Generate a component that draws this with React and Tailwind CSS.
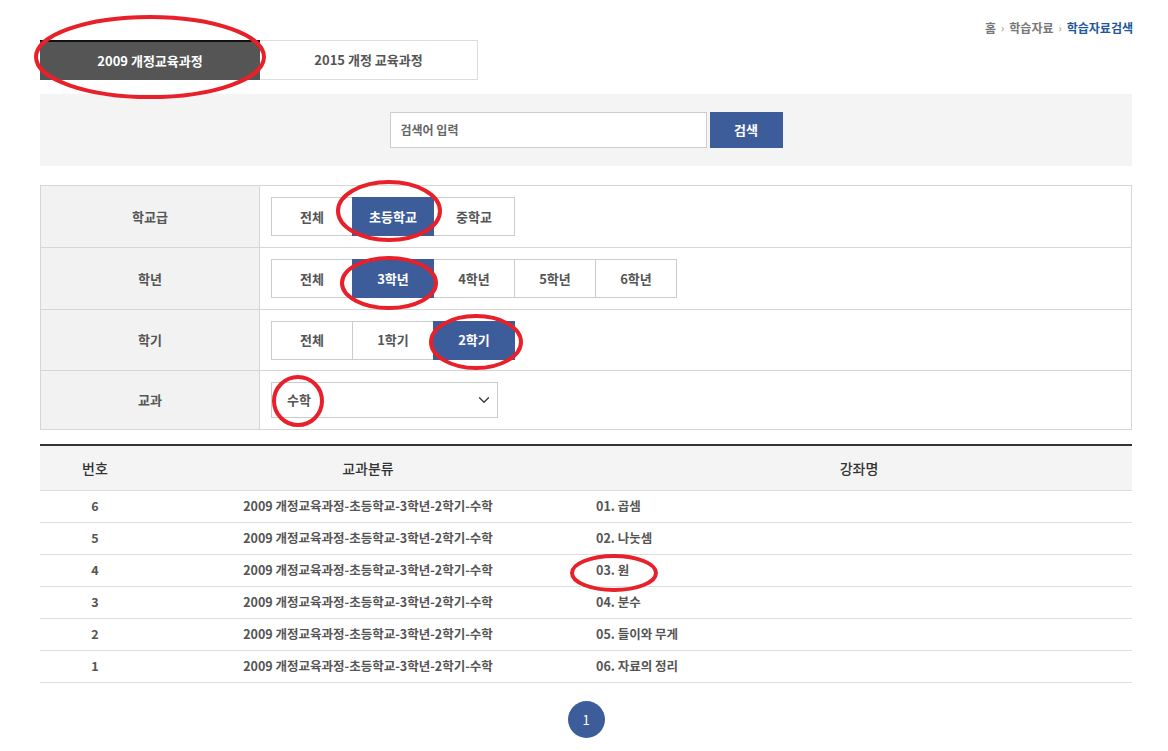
import { ChevronDown } from 'lucide-react'

const FONT = { fontFamily: '"Noto Sans CJK KR", "Noto Sans", sans-serif' }

const ROWS = [
  { no: 6, title: '01. 곱셈' },
  { no: 5, title: '02. 나눗셈' },
  { no: 4, title: '03. 원' },
  { no: 3, title: '04. 분수' },
  { no: 2, title: '05. 들이와 무게' },
  { no: 1, title: '06. 자료의 정리' },
]

function OptButton({ label, active }) {
  return (
    <div
      className={`w-[82px] h-[39px] -ml-px first:ml-0 flex items-center justify-center text-[13px] font-bold border ${
        active ? 'bg-[#3d5c9a] border-[#3d5c9a] text-white relative' : 'bg-white border-[#cccccc] text-[#555]'
      }`}
    >
      {label}
    </div>
  )
}

function FilterRow({ label, children, h }) {
  return (
    <div className={`flex border-b border-[#d6d6d6] last:border-b-0 ${h}`}>
      <div className="w-[219px] shrink-0 bg-[#f2f2f2] border-r border-[#d6d6d6] flex items-center justify-center text-[13px] font-bold text-[#555]">
        {label}
      </div>
      <div className="flex-1 flex items-center pl-[11px]">{children}</div>
    </div>
  )
}

export default function App() {
  return (
    <div className="relative w-[1168px] h-[751px] bg-white overflow-hidden" style={FONT}>
      {/* Breadcrumb */}
      <div className="flex justify-end items-center gap-[5px] pr-[35px] pt-[15px] h-[40px] text-[12px] text-[#777] font-bold">
        <span>홈</span>
        <span className="text-[#b5a68a] text-[10px]">›</span>
        <span>학습자료</span>
        <span className="text-[#b5a68a] text-[10px]">›</span>
        <span className="text-[#1e5799]">학습자료검색</span>
      </div>

      <div className="px-[40px] pr-[36px]">
        {/* Curriculum tabs */}
        <div className="flex h-[40px]">
          <div className="w-[220px] bg-[#555555] border-t-2 border-[#111] flex items-center justify-center text-[13px] font-bold text-white">
            2009 개정교육과정
          </div>
          <div className="w-[218px] border border-l-0 border-[#dddddd] flex items-center justify-center text-[13px] font-bold text-[#555]">
            2015 개정 교육과정
          </div>
        </div>

        {/* Search */}
        <div className="mt-[14px] h-[72px] bg-[#f4f4f4] flex items-center justify-center gap-[3px]">
          <div className="w-[317px] h-[36px] bg-white border border-[#cccccc] flex items-center pl-[10px] text-[12px] font-bold text-[#666]">
            검색어 입력
          </div>
          <div className="w-[73px] h-[36px] bg-[#3d5c9a] flex items-center justify-center text-[13px] font-bold text-white">
            검색
          </div>
        </div>

        {/* Filters */}
        <div className="mt-[19px] border border-[#d6d6d6]">
          <FilterRow label="학교급" h="h-[62px]">
            <div className="flex">
              <OptButton label="전체" />
              <OptButton label="초등학교" active />
              <OptButton label="중학교" />
            </div>
          </FilterRow>
          <FilterRow label="학년" h="h-[62px]">
            <div className="flex">
              <OptButton label="전체" />
              <OptButton label="3학년" active />
              <OptButton label="4학년" />
              <OptButton label="5학년" />
              <OptButton label="6학년" />
            </div>
          </FilterRow>
          <FilterRow label="학기" h="h-[61px]">
            <div className="flex">
              <OptButton label="전체" />
              <OptButton label="1학기" />
              <OptButton label="2학기" active />
            </div>
          </FilterRow>
          <FilterRow label="교과" h="h-[58px]">
            <div className="w-[227px] h-[36px] border border-[#cccccc] flex items-center justify-between pl-[15px] pr-[4px] text-[13px] font-bold text-[#555]">
              <span>수학</span>
              <ChevronDown size={18} strokeWidth={1.6} className="text-[#333]" />
            </div>
          </FilterRow>
        </div>

        {/* Results */}
        <div className="mt-[14px] border-t-2 border-[#333]">
          <div className="flex h-[45px] bg-[#f4f4f4] border-b border-[#dddddd] text-[14px] text-[#333] font-medium">
            <div className="w-[110px] flex items-center justify-center">번호</div>
            <div className="w-[436px] flex items-center justify-center">교과분류</div>
            <div className="flex-1 flex items-center justify-center">강좌명</div>
          </div>
          {ROWS.map(r => (
            <div key={r.no} className="flex h-[32px] border-b border-[#dddddd] text-[12.5px] font-bold text-[#555]">
              <div className="w-[110px] flex items-center justify-center">{r.no}</div>
              <div className="w-[436px] flex items-center justify-center">2009 개정교육과정-초등학교-3학년-2학기-수학</div>
              <div className="flex-1 flex items-center pl-[10px]">{r.title}</div>
            </div>
          ))}
        </div>

        {/* Pagination */}
        <div className="flex justify-center mt-[18px]">
          <div className="w-[37px] h-[37px] rounded-full bg-[#3d5c9a] text-white text-[13px] flex items-center justify-center">
            1
          </div>
        </div>
      </div>

      {/* Red annotation marks */}
      <svg className="absolute inset-0 pointer-events-none" width="1168" height="751">
        <g fill="none" stroke="#e8202a" strokeWidth="4">
          <ellipse cx="150" cy="57" rx="114" ry="40" />
          <ellipse cx="389" cy="211" rx="51" ry="29" />
          <ellipse cx="389" cy="283" rx="47" ry="25" />
          <ellipse cx="476" cy="342" rx="45" ry="26" />
          <ellipse cx="298" cy="401" rx="24" ry="24" />
          <ellipse cx="614" cy="573" rx="42" ry="17" />
        </g>
      </svg>
    </div>
  )
}
